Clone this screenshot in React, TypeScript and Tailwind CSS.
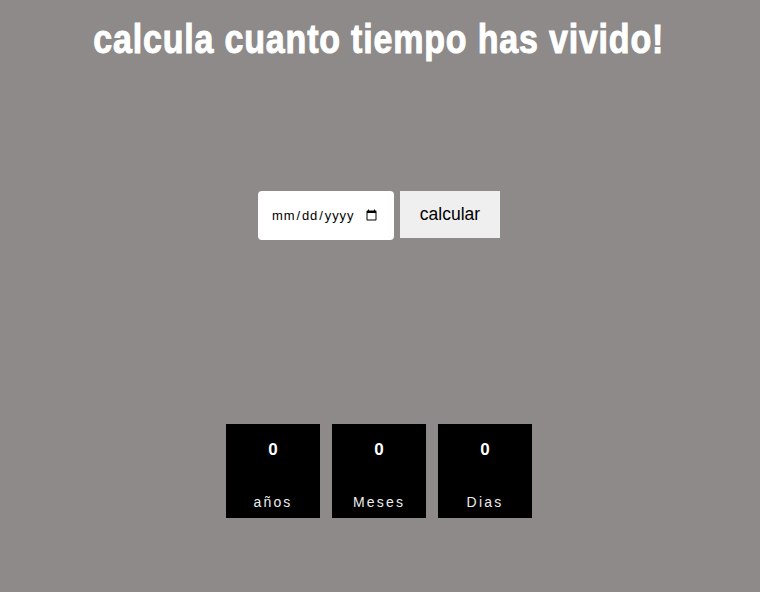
import React from "react";

export default function App() {
  return (
    <div className="min-h-[592px] w-full bg-[#8d8a89]" style={{ fontFamily: '"Liberation Sans", Arial, sans-serif' }}>
      <div className="w-[758px] flex flex-col items-center">
        <h1
          className="mt-[16px] text-white font-bold text-[40px] leading-[46px] tracking-[0.95px] whitespace-nowrap [-webkit-text-stroke:1px_white]"
          style={{ transform: "scaleX(0.85)" }}
        >
          calcula cuanto tiempo has vivido!
        </h1>
        <div className="mt-[129px] flex items-start gap-[6px]">
          <input
            type="date"
            className="w-[136px] h-[49px] bg-white rounded-[4px] pl-[13px] pr-[14px] text-[13px] tracking-[0.9px] text-black"
          />
          <button className="w-[100px] h-[47px] bg-[#efefef] text-black text-[17.5px]">calcular</button>
        </div>
        <div className="mt-[184px] flex gap-[12px]">
          {[
            ["0", "años"],
            ["0", "Meses"],
            ["0", "Dias"],
          ].map(([n, l]) => (
            <div key={l} className="w-[94px] h-[94px] bg-black flex flex-col items-center text-white">
              <div className="mt-[15px] text-[17px] font-bold leading-[22px]">{n}</div>
              <div className="mt-[32px] text-[14px] tracking-[2.2px] leading-[18px] text-[#ececec]">{l}</div>
            </div>
          ))}
        </div>
      </div>
    </div>
  );
}
